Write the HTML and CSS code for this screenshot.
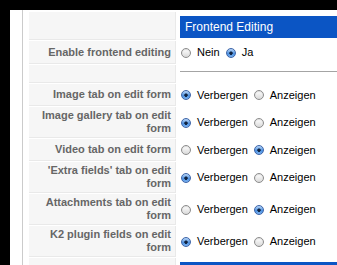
FILE: index.html
```html
<!DOCTYPE html>
<html lang="de">
<head>
<meta charset="utf-8">
<title>Frontend Editing</title>
<link rel="stylesheet" href="styles.css">
</head>
<body>
<div class="window">
  <div class="panel">
    <div class="params">
      <div class="key key--blank"></div>
      <div class="value value--header"><div class="section-title">Frontend Editing</div></div>

      <div class="key">Enable frontend editing</div>
      <div class="value value--tall">
        <label class="opt"><input type="radio" name="fe" value="0"><span>Nein</span></label>
        <label class="opt"><input type="radio" name="fe" value="1" checked><span>Ja</span></label>
      </div>

      <div class="key key--blank"></div>
      <div class="value value--rule"><div class="rule"></div></div>

      <div class="key">Image tab on edit form</div>
      <div class="value">
        <label class="opt"><input type="radio" name="img" value="0" checked><span>Verbergen</span></label>
        <label class="opt"><input type="radio" name="img" value="1"><span>Anzeigen</span></label>
      </div>

      <div class="key">Image gallery tab on edit form</div>
      <div class="value">
        <label class="opt"><input type="radio" name="gal" value="0" checked><span>Verbergen</span></label>
        <label class="opt"><input type="radio" name="gal" value="1"><span>Anzeigen</span></label>
      </div>

      <div class="key">Video tab on edit form</div>
      <div class="value">
        <label class="opt"><input type="radio" name="vid" value="0"><span>Verbergen</span></label>
        <label class="opt"><input type="radio" name="vid" value="1" checked><span>Anzeigen</span></label>
      </div>

      <div class="key">'Extra fields' tab on edit form</div>
      <div class="value">
        <label class="opt"><input type="radio" name="ext" value="0" checked><span>Verbergen</span></label>
        <label class="opt"><input type="radio" name="ext" value="1"><span>Anzeigen</span></label>
      </div>

      <div class="key">Attachments tab on edit form</div>
      <div class="value">
        <label class="opt"><input type="radio" name="att" value="0"><span>Verbergen</span></label>
        <label class="opt"><input type="radio" name="att" value="1" checked><span>Anzeigen</span></label>
      </div>

      <div class="key">K2 plugin fields on edit form</div>
      <div class="value">
        <label class="opt"><input type="radio" name="k2p" value="0" checked><span>Verbergen</span></label>
        <label class="opt"><input type="radio" name="k2p" value="1"><span>Anzeigen</span></label>
      </div>

      <div class="key key--blank"></div>
      <div class="value value--header"><div class="section-title"></div></div>
    </div>
  </div>
</div>
</body>
</html>
```
FILE: styles.css
```css
html, body {
  margin: 0;
  padding: 0;
  height: 100%;
}

body {
  background: #000;
  overflow: hidden;
  font-family: "Liberation Sans", Arial, Helvetica, sans-serif;
  font-size: 11px;
  color: #000;
}

.window {
  margin: 10px 0 0 10px;
  background: #fff;
  min-height: 100%;
}

.panel {
  margin-left: 12px;
  border-left: 1px solid #cbcbcb;
  padding: 2px 0 0 6px;
  min-height: 300px;
}

.params {
  display: grid;
  grid-template-columns: 147px 1fr;
  gap: 1px;
}

.key {
  box-sizing: border-box;
  min-height: 22px;
  padding: 2px 4px 2px 5px;
  background: #f6f6f6;
  border-bottom: 1px solid #e9e9e9;
  border-right: 1px solid #e9e9e9;
  color: #666;
  font-weight: bold;
  line-height: 13px;
  text-align: right;
  display: flex;
  align-items: center;
  justify-content: flex-end;
}

.key--blank {
  min-height: 0;
}

.value {
  box-sizing: border-box;
  min-height: 22px;
  padding: 0 0 0 3px;
  display: flex;
  align-items: center;
}

.value--tall {
  min-height: 23px;
}

.value--header {
  display: block;
  padding: 4px 0 2px 3px;
}

.section-title {
  box-sizing: border-box;
  height: 22px;
  padding: 0 5px;
  background: #0b55c4;
  color: #fff;
  font-size: 12px;
  line-height: 22px;
}

.value--rule {
  display: block;
  min-height: 18px;
  padding-top: 6px;
}

.rule {
  border-top: 1px solid #a4a4a4;
}

.opt {
  display: inline-flex;
  align-items: center;
  line-height: 13px;
  margin-right: 5px;
}

.opt input {
  -webkit-appearance: none;
  appearance: none;
  box-sizing: border-box;
  width: 10px;
  height: 10px;
  margin: 0 6px 0 1px;
  border-radius: 50%;
  border: 1px solid #8c8c8c;
  background: linear-gradient(#ffffff, #d9d9d9);
  box-shadow: inset 0 1px 1px rgba(0, 0, 0, 0.12);
}

.opt input:checked {
  border-color: #3d64a8;
  background:
    radial-gradient(circle at 50% 52%, #10223f 0, #10223f 1.4px, rgba(16, 34, 63, 0) 2px),
    linear-gradient(#b9d6f7, #4a8fe0 60%, #7fb4ef);
  box-shadow: none;
}
```
